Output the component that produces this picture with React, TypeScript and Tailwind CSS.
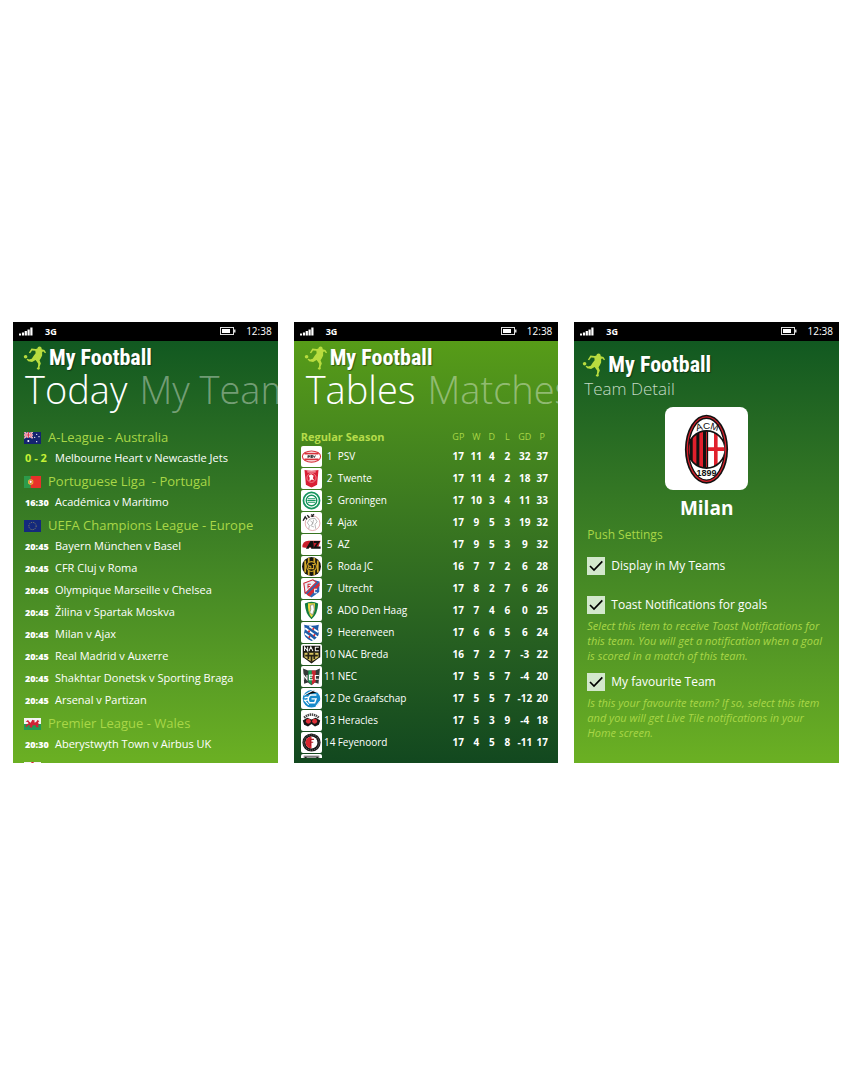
import type { ReactNode } from "react";

function StatusBar() {
  return (
    <div className="flex h-[19px] shrink-0 items-center bg-black px-1.5 text-[10px] text-white">
      <svg viewBox="0 0 14 9" className="h-[9px] w-3.5" fill="#fff" aria-label="Signal strength">
        <rect x="0" y="6.5" width="2" height="2" />
        <rect x="2.900" y="5.5" width="2.200" height="3" />
        <rect x="5.700" y="4" width="2.200" height="4.500" />
        <rect x="8.500" y="2.500" width="2.200" height="6" />
        <rect x="11.300" y="0.500" width="2.200" height="8" />
      </svg>
      <span className="ml-3 text-[9px] font-bold">3G</span>
      <svg viewBox="0 0 16 8" className="ml-auto h-2 w-4" fill="none" aria-label="Battery">
        <rect x="0.500" y="0.500" width="13" height="7" stroke="#ddd" />
        <rect x="2" y="2" width="8" height="4" fill="#fff" />
        <rect x="14" y="2.500" width="1.500" height="3" fill="#ddd" />
      </svg>
      <time className="ml-2.5">12:38</time>
    </div>
  );
}

function Brand() {
  return (
    <div className="flex items-center gap-0.5">
      <svg viewBox="0 0 72 74" className="size-6" fill="#b9dc3f" aria-hidden="true">
        <circle cx="7" cy="33" r="5.500" />
        <circle cx="50" cy="8" r="6.500" />
        <path d="M25 8 L38 9 L48 7 L57 10 L65 12 L70 20 L67 22 L61 16 L58 19 L58 29 L54 38 L50 44 L54 54 L50 64 L51 71 L46 73 L41 70 L45 65 L46 55 L38 43 L27 49 L15 47 L10 41 L12 39 L18 42 L26 39 L32 30 L38 22 L37 15 L27 14 L21 22 L17 21 Z" />
      </svg>
      <span className="font-['Liberation_Sans_Narrow','Roboto_Condensed',sans-serif] text-[22px] leading-6 font-bold whitespace-nowrap text-white [text-shadow:1px_1px_1px_#0006]">
        My Football
      </span>
    </div>
  );
}

function Screen({ tone, children }: { tone: string; children: ReactNode }) {
  return (
    <section className={`flex aspect-[3/5] min-w-0 flex-col overflow-hidden text-white ${tone}`}>
      <StatusBar />
      {children}
    </section>
  );
}

function Pivot({ current, next }: { current: string; next: string }) {
  return (
    <header className="shrink-0 overflow-hidden pt-[5px] pb-3 pl-2.5">
      <Brand />
      <div className="flex gap-3 pl-0.5 text-[38px] leading-[38px] font-light whitespace-nowrap">
        <h1>{current}</h1>
        <span className="text-white/40">{next}</span>
      </div>
    </header>
  );
}

type FlagName = "au" | "pt" | "eu" | "wales" | "england";

function Flag({ name }: { name: FlagName }) {
  return (
    <svg viewBox="0 0 51 36" className="h-3 w-[17px] shrink-0" aria-hidden="true">
      {name === "au" && (
        <>
          <rect width="51" height="36" fill="#14246f" />
          <path d="M0 0 L26 18 M26 0 L0 18" stroke="#fff" strokeWidth="5" />
          <path d="M0 0 L26 18 M26 0 L0 18" stroke="#d8304a" strokeWidth="2" />
          <path d="M13 0 V18 M0 9 H26" stroke="#fff" strokeWidth="6" />
          <path d="M13 0 V18 M0 9 H26" stroke="#d8304a" strokeWidth="3.500" />
          <g fill="#fff">
            <circle cx="13" cy="27" r="3" />
            <circle cx="38" cy="7" r="2" />
            <circle cx="32" cy="16" r="2" />
            <circle cx="45" cy="14" r="2" />
            <circle cx="38" cy="29" r="2" />
          </g>
        </>
      )}
      {name === "pt" && (
        <>
          <rect width="51" height="36" fill="#e8302a" />
          <rect width="20" height="36" fill="#2c9a4a" />
          <circle cx="20" cy="18" r="8" fill="#e8c83c" />
          <rect x="16" y="13" width="8" height="9" rx="3" fill="#fff" stroke="#d22" strokeWidth="2" />
        </>
      )}
      {name === "eu" && (
        <>
          <rect width="51" height="36" fill="#14297c" />
          <circle cx="25.500" cy="18" r="11" fill="none" stroke="#b5a95c" strokeWidth="2.500" strokeDasharray="2.500 3.260" />
        </>
      )}
      {name === "wales" && (
        <>
          <rect width="51" height="18" fill="#f4f4f4" />
          <rect y="18" width="51" height="18" fill="#239a55" />
          <path
            d="M5 11 L12 6 L16 11 L20 14 L25 5 L33 8 L30 13 L36 13 L40 6 L46 9 L42 14 L46 20 L41 22 L45 28 L37 28 L35 22 L26 22 L24 29 L16 28 L19 22 L12 22 L8 28 L4 24 L10 18 L14 16 L11 12 Z"
            fill="#cf2435"
          />
        </>
      )}
      {name === "england" && (
        <>
          <rect width="51" height="36" fill="#f4f4f4" />
          <path d="M25.500 0 V36 M0 18 H51" stroke="#d8243a" strokeWidth="7" />
        </>
      )}
    </svg>
  );
}

const leagues: { flag: FlagName; name: string; live?: boolean; matches: [string, string][] }[] = [
  { flag: "au", name: "A-League - Australia", live: true, matches: [["0 - 2", "Melbourne Heart v Newcastle Jets"]] },
  { flag: "pt", name: "Portuguese Liga  - Portugal", matches: [["16:30", "Académica v Marítimo"]] },
  {
    flag: "eu",
    name: "UEFA Champions League - Europe",
    matches: [
      ["20:45", "Bayern München v Basel"],
      ["20:45", "CFR Cluj v Roma"],
      ["20:45", "Olympique Marseille v Chelsea"],
      ["20:45", "Žilina v Spartak Moskva"],
      ["20:45", "Milan v Ajax"],
      ["20:45", "Real Madrid v Auxerre"],
      ["20:45", "Shakhtar Donetsk v Sporting Braga"],
      ["20:45", "Arsenal v Partizan"],
    ],
  },
  { flag: "wales", name: "Premier League - Wales", matches: [["20:30", "Aberystwyth Town v Airbus UK"]] },
  { flag: "england", name: "", matches: [] },
];

function Today() {
  return (
    <Screen tone="bg-linear-to-b from-[#0b5520] to-[#6bb023]">
      <Pivot current="Today" next="My Teams" />
      <div className="mt-2 flex min-h-0 flex-1 flex-col gap-0.5 overflow-hidden pl-[11px]">
        {leagues.map((league) => (
          <div key={league.flag} className="shrink-0">
            <h2 className="flex h-5 items-center gap-[7px] text-[13px] whitespace-pre text-[#a9d747]">
              <Flag name={league.flag} />
              {league.name}
            </h2>
            <ul>
              {league.matches.map(([time, teams]) => (
                <li key={teams} className="flex h-[22px] items-center pb-px pl-px whitespace-nowrap">
                  <b className={league.live ? "w-[30px] text-[11px] text-[#c6f135]" : "w-[30px] text-[9px] font-extrabold"}>
                    {time}
                  </b>
                  <span className="text-[11px]">{teams}</span>
                </li>
              ))}
            </ul>
          </div>
        ))}
      </div>
    </Screen>
  );
}

const crests: Record<string, ReactNode> = {
  PSV: (
    <>
      <ellipse cx="30" cy="30" rx="26" ry="16" fill="#fff" stroke="#d8343c" strokeWidth="3" />
      <path d="M10 22 H50 M10 38 H50" stroke="#d8343c" strokeWidth="5" />
      <rect x="17" y="25" width="26" height="10" rx="4" fill="#fff" />
      <path d="M20 27 V34 M20 28 H25 V31 H20 M34 27 H28 V30 H33 V33 H27 M35 27 L38 33 L41 27" stroke="#222" strokeWidth="2.500" fill="none" />
    </>
  ),
  Twente: (
    <>
      <path d="M10 6 Q30 10 50 6 L46 48 Q38 52 30 56 Q22 52 14 48 Z" fill="#d91f35" />
      <circle cx="30" cy="28" r="13" fill="none" stroke="#f6a5ad" strokeWidth="2" />
      <path d="M24 38 L25 28 L22 22 L29 18 L36 22 L34 29 L38 36 L31 33 Z" fill="#fff" />
      <path d="M18 11 H42" stroke="#f6a5ad" strokeWidth="3" />
    </>
  ),
  Groningen: (
    <>
      <circle cx="30" cy="30" r="23" fill="#fff" stroke="#16955e" strokeWidth="5" />
      <circle cx="30" cy="30" r="15" fill="#fff" stroke="#16955e" strokeWidth="4" />
      <path d="M20 25 H40 M18 30 H42 M20 35 H40" stroke="#16955e" strokeWidth="3" />
    </>
  ),
  Ajax: (
    <>
      <circle cx="33" cy="32" r="21" fill="#fff" stroke="#d98c90" strokeWidth="2" />
      <path d="M6 25 L12 14 L17 21 M18 9 L24 17 M29 7 L36 13 M37 6 L30 14" stroke="#222" strokeWidth="4" fill="none" />
      <path d="M22 49 L24 39 L18 31 L25 20 L40 18 L46 28 L40 35 L42 48 M27 25 L34 31 L28 39 L37 43 M36 22 L33 36" stroke="#999" strokeWidth="2" fill="none" />
    </>
  ),
  AZ: (
    <>
      <path d="M4 38 Q3 20 22 19 H56 L49 39 H12 Z" fill="#c9202c" />
      <path d="M14 42 L27 20 H35 L37 42 H29 V37 H24 L22 42 Z M37 20 H55 L44 36 H56 V42 H36 L38 36 L45 26 H37 Z" fill="#111" />
    </>
  ),
  "Roda JC": (
    <>
      <circle cx="30" cy="30" r="27" fill="#17160f" />
      <path d="M12 13 V47 M22 6 V54 M38 6 V54 M48 13 V47" stroke="#d3a92b" strokeWidth="5" />
      <circle cx="30" cy="30" r="14" fill="#17160f" stroke="#d3a92b" strokeWidth="3" />
      <path d="M22 24 V36 H28 V29 H22 M32 24 H40 M36 24 V36 H30" stroke="#d3a92b" strokeWidth="3" fill="none" />
    </>
  ),
  Utrecht: (
    <>
      <path d="M8 16 L34 5 L53 10 L52 40 L30 56 L10 42 Z" fill="#2a68b4" />
      <path d="M8 15 L34 5 L44 12 L12 44 Z" fill="#e8eef6" stroke="#d52b35" strokeWidth="3" />
      <path d="M16 48 L53 12 V22 L25 53 Z" fill="#d52b35" />
      <path d="M19 18 H28 M20 18 V30 M20 24 H26" stroke="#d52b35" strokeWidth="3" fill="none" />
      <path d="M46 32 H39 V42 H46" stroke="#fff" strokeWidth="3" fill="none" />
    </>
  ),
  "ADO Den Haag": (
    <>
      <path d="M11 10 Q30 0 49 10 Q48 40 30 55 Q12 40 11 10" fill="#137c3d" />
      <path d="M20 9 H40 Q42 34 30 50 Q18 34 20 9" fill="#eed840" />
      <path d="M27 15 L36 13 L38 27 L33 43 L25 35 L28 27 Z" fill="#fff" stroke="#777" strokeWidth="2" />
    </>
  ),
  Heerenveen: (
    <>
      <path d="M9 8 Q30 14 51 8 Q47 20 51 30 Q52 46 30 54 Q8 46 9 30 Q13 20 9 8" fill="#1e5ca8" />
      <path d="M12 18 L48 44 M24 12 L50 29 M11 33 L36 51" stroke="#fff" strokeWidth="5" />
      <path d="M21 25 L25 28 M36 36 L40 39 M33 18 L37 21 M22 41 L26 44" stroke="#d92d35" strokeWidth="6" />
    </>
  ),
  "NAC Breda": (
    <>
      <path d="M5 5 H55 V38 Q46 43 30 56 Q14 43 5 38 Z" fill="#17150f" />
      <path d="M10 20 V8 L19 20 V8 M23 20 L28 8 L34 20 M51 9 H41 V19 H51" stroke="#eee" strokeWidth="3" fill="none" />
      <path d="M10 25 H50 V38 L30 51 L10 38 Z" fill="#d8c360" />
      <path d="M21 25 V43 M38 25 V43 M12 33 H48 M30 36 V51" stroke="#272115" strokeWidth="5" />
    </>
  ),
  NEC: (
    <>
      <path d="M6 7 L20 13 H41 L54 7 L50 51 L39 47 L30 55 L20 47 L9 51 Z" fill="#343a37" />
      <path d="M21 13 H31 V54 L21 45 Z" fill="#1d9a55" />
      <path d="M31 13 H42 V45 L31 54 Z" fill="#c92832" />
      <path d="M8 39 V26 L17 39 V26 M34 26 H24 V39 H34 M24 32 H32 M51 27 H41 V38 H51" stroke="#fff" strokeWidth="3" fill="none" />
    </>
  ),
  "De Graafschap": (
    <>
      <circle cx="30" cy="31" r="25" fill="#168aca" />
      <path d="M8 21 L33 7 L47 12 M8 33 L22 48 M43 52 L54 38" stroke="#fff" strokeWidth="3" />
      <path d="M44 20 H27 Q16 30 24 42 H39 L43 31 H30 M10 28 L19 26 M11 36 L20 34" stroke="#fff" strokeWidth="4" fill="none" />
    </>
  ),
  Heracles: (
    <>
      <path d="M9 22 Q30 4 51 22" stroke="#444" strokeWidth="7" strokeDasharray="4 2" fill="none" />
      <path d="M5 30 L18 22 L30 27 L42 22 L55 30 L51 42 L40 47 L30 40 L20 47 L9 42 Z" fill="#171717" />
      <circle cx="21" cy="32" r="7" fill="#de3038" />
      <circle cx="39" cy="32" r="7" fill="#de3038" />
    </>
  ),
  Feyenoord: (
    <>
      <circle cx="30" cy="30" r="26" fill="#191919" />
      <circle cx="30" cy="30" r="22" fill="none" stroke="#999" strokeWidth="2" strokeDasharray="3 3" />
      <circle cx="30" cy="30" r="17" fill="#fff" />
      <path d="M30 13 V47 A17 17 0 0 1 30 13" fill="#d8252f" />
      <path d="M27 20 V40 M27 21 H37 M27 29 H35" stroke="#a91b25" strokeWidth="3" fill="none" />
    </>
  ),
  next: <path d="M9 6 H51 V38 L30 54 L9 38 Z M16 10 H44" fill="#222" stroke="#999" strokeWidth="3" />,
};

function Crest({ team }: { team: string }) {
  return (
    <svg viewBox="0 0 60 60" className="block size-[21px] rounded-xs bg-white" aria-hidden="true">
      {crests[team]}
    </svg>
  );
}

const standings: [string, number[]][] = [
  ["PSV", [17, 11, 4, 2, 32, 37]],
  ["Twente", [17, 11, 4, 2, 18, 37]],
  ["Groningen", [17, 10, 3, 4, 11, 33]],
  ["Ajax", [17, 9, 5, 3, 19, 32]],
  ["AZ", [17, 9, 5, 3, 9, 32]],
  ["Roda JC", [16, 7, 7, 2, 6, 28]],
  ["Utrecht", [17, 8, 2, 7, 6, 26]],
  ["ADO Den Haag", [17, 7, 4, 6, 0, 25]],
  ["Heerenveen", [17, 6, 6, 5, 6, 24]],
  ["NAC Breda", [16, 7, 2, 7, -3, 22]],
  ["NEC", [17, 5, 5, 7, -4, 20]],
  ["De Graafschap", [17, 5, 5, 7, -12, 20]],
  ["Heracles", [17, 5, 3, 9, -4, 18]],
  ["Feyenoord", [17, 4, 5, 8, -11, 17]],
];

function Tables() {
  return (
    <Screen tone="bg-linear-to-b from-[#5aa016] to-[#12481f]">
      <Pivot current="Tables" next="Matches" />
      <div className="mt-2 mb-[5px] min-h-0 flex-1 overflow-hidden pr-2 pl-[7px]">
        <table className="w-full table-fixed border-collapse text-center text-[10px] whitespace-nowrap">
          <colgroup>
            <col className="w-[22px]" />
            <col className="w-3.5" />
            <col />
            <col className="w-5" />
            <col className="w-4" />
            <col className="w-[15px]" />
            <col className="w-4" />
            <col className="w-[19px]" />
            <col className="w-4" />
          </colgroup>
          <thead>
            <tr className="h-[18px] text-[9px] text-[#a9d747]">
              <th colSpan={3} className="p-0 text-left text-[11px] font-bold text-[#b5dc4a]">
                Regular Season
              </th>
              {["GP", "W", "D", "L", "GD", "P"].map((label) => (
                <th key={label} className="p-0 font-normal">
                  {label}
                </th>
              ))}
            </tr>
          </thead>
          <tbody>
            {standings.map(([team, stats], i) => (
              <tr key={team} className="h-[22px]">
                <td className="p-0">
                  <Crest team={team} />
                </td>
                <td className="p-0">{i + 1}</td>
                <td className="p-0 pl-px text-left">{team}</td>
                {stats.map((value, j) => (
                  <td key={j} className="p-0 font-bold">
                    {value}
                  </td>
                ))}
              </tr>
            ))}
            <tr className="h-[22px]">
              <td className="p-0">
                <Crest team="next" />
              </td>
            </tr>
          </tbody>
        </table>
      </div>
    </Screen>
  );
}

function MilanCrest() {
  return (
    <svg viewBox="0 0 250 250" className="size-[83px] rounded-lg bg-white" role="img" aria-label="AC Milan crest">
      <defs>
        <clipPath id="milan-core">
          <circle cx="125" cy="128" r="56" />
        </clipPath>
        <clipPath id="milan-oval">
          <ellipse cx="125" cy="127" rx="54" ry="93" />
        </clipPath>
      </defs>
      <ellipse cx="125" cy="127" rx="65" ry="104" fill="#111" />
      <ellipse cx="125" cy="127" rx="60" ry="99" fill="#d5202b" />
      <ellipse cx="125" cy="127" rx="54" ry="93" fill="#fff" stroke="#111" strokeWidth="4" />
      <g clipPath="url(#milan-oval)">
        <g clipPath="url(#milan-core)">
          <rect x="68" y="70" width="60" height="120" fill="#e0202c" />
          <path d="M79 70 V190 M99 70 V190 M119 70 V190" stroke="#111" strokeWidth="9" />
          <rect x="127" y="70" width="60" height="120" fill="#fff" />
          <path d="M153 70 V190 M127 127 H185" stroke="#e0202c" strokeWidth="11" />
          <path d="M128 70 V190" stroke="#111" strokeWidth="4" />
        </g>
        <circle cx="125" cy="128" r="56" fill="none" stroke="#111" strokeWidth="5" />
      </g>
      <g fill="#111" fontFamily="Liberation Sans, sans-serif" textAnchor="middle">
        <text x="105" y="70" fontSize="30" transform="rotate(-16 105 70)">
          A
        </text>
        <text x="125" y="66" fontSize="30">
          C
        </text>
        <text x="147" y="70" fontSize="30" transform="rotate(16 147 70)">
          M
        </text>
        <text x="125" y="207" fontSize="27" fontWeight="600">
          1899
        </text>
      </g>
    </svg>
  );
}

function Option({ id, label, hint }: { id: string; label: string; hint?: string[] }) {
  return (
    <div>
      <div className="flex h-[18px] items-center gap-1.5">
        <span className="grid size-[18px]">
          <input
            id={id}
            type="checkbox"
            defaultChecked
            aria-describedby={hint ? `${id}-hint` : undefined}
            className="peer col-start-1 row-start-1 size-[18px] appearance-none bg-[#d3e8cc]"
          />
          <svg
            viewBox="0 0 54 54"
            className="pointer-events-none invisible col-start-1 row-start-1 size-[18px] peer-checked:visible"
            fill="none"
            stroke="#000"
            strokeWidth="5"
            aria-hidden="true"
          >
            <path d="M9 27 L21 39 L46 13" />
          </svg>
        </span>
        <label htmlFor={id} className="text-[12px] whitespace-nowrap">
          {label}
        </label>
      </div>
      {hint && (
        <p id={`${id}-hint`} className="mt-1 text-[11px] leading-[15px] whitespace-nowrap text-[#a9d747] italic">
          {hint.map((line) => (
            <span key={line} className="block">
              {line}
            </span>
          ))}
        </p>
      )}
    </div>
  );
}

function TeamDetail() {
  return (
    <Screen tone="bg-linear-to-b from-[#0b5520] to-[#6bb023]">
      <header className="shrink-0 pt-3 pl-2">
        <Brand />
        <h1 className="pl-0.5 text-[17px] leading-6 font-light text-[#c3dac4]">Team Detail</h1>
      </header>
      <div className="mt-1.5 flex shrink-0 flex-col items-center">
        <MilanCrest />
        <h2 className="mt-1.5 text-[19px] leading-6 font-bold">Milan</h2>
      </div>
      <form className="mt-[5px] px-[13px]">
        <h3 className="text-[12px] leading-5 text-[#a9d747]">Push Settings</h3>
        <div className="mt-3 flex flex-col gap-[21px]">
          <Option id="display" label="Display in My Teams" />
          <div className="flex flex-col gap-2.5">
            <Option
              id="toast"
              label="Toast Notifications for goals"
              hint={[
                "Select this item to receive Toast Notifications for",
                "this team. You will get a notification when a goal",
                "is scored in a match of this team.",
              ]}
            />
            <Option
              id="favourite"
              label="My favourite Team"
              hint={[
                "Is this your favourite team? If so, select this item",
                "and you will get Live Tile notifications in your",
                "Home screen.",
              ]}
            />
          </div>
        </div>
      </form>
    </Screen>
  );
}

export default function App() {
  return (
    <main className="grid min-h-screen grid-cols-3 content-center gap-4 bg-white pt-[5px] pr-[7px] pl-[13px] font-['Open_Sans','Noto_Sans',sans-serif]">
      <Today />
      <Tables />
      <TeamDetail />
    </main>
  );
}
